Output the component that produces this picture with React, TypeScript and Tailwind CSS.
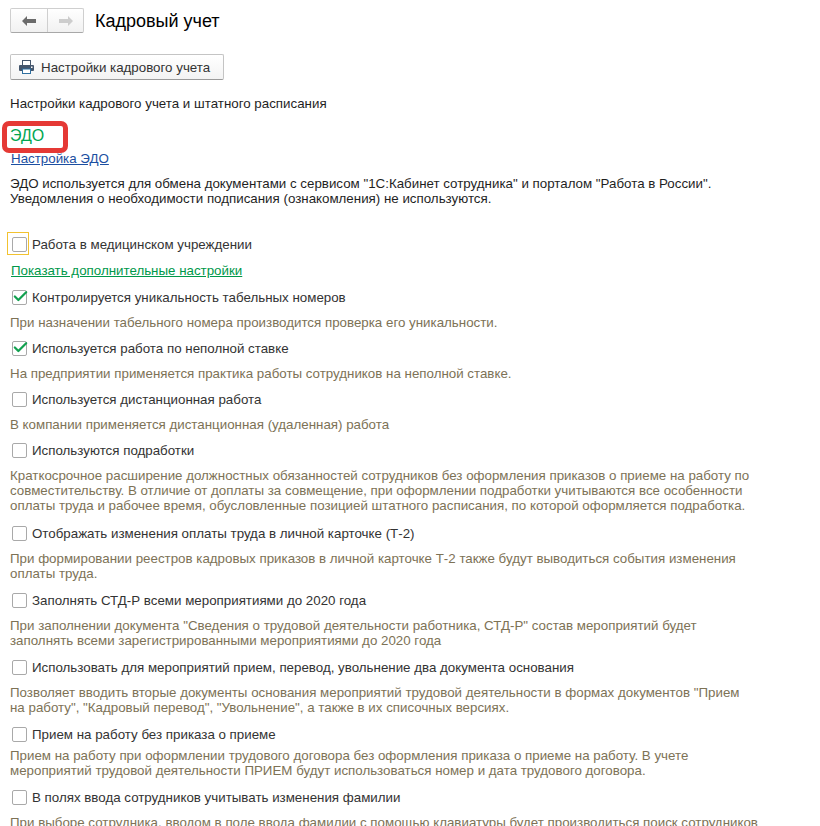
import { Check } from "lucide-react";

function Option({ label, checked, focused, top, gap = 10, hint }: { label: string; checked?: boolean; focused?: boolean; top: number; gap?: number; hint?: string[] }) {
  return (
    <div style={{ marginTop: top }}>
      <div className="flex items-center h-[16px]">
        <div className="relative w-[18px] h-[18px] flex items-center justify-center shrink-0">
          {focused && <div className="absolute left-[-3px] top-[-3px] w-[22px] h-[23px] border border-[#f2c230]" />}
          <div className="relative w-[15px] h-[15px] bg-white border border-[#a9a9a9] rounded-[2px]">
            {checked && <Check className="absolute left-[-1px] top-[-3px] w-[17px] h-[17px] text-[#12a150]" strokeWidth={3.2} />}
          </div>
        </div>
        <span className="ml-[4px] text-[#333333]">{label}</span>
      </div>
      {hint && (
        <div style={{ marginTop: gap }} className="leading-[15px] text-[#7d7256]">
          {hint.map((h) => (
            <div key={h} className="whitespace-nowrap">{h}</div>
          ))}
        </div>
      )}
    </div>
  );
}

export default function App() {
  return (
    <div className="w-[820px] h-[826px] overflow-hidden bg-white text-[13.33px] leading-[15px] text-[#1f1f1f] pl-[10px] font-['Liberation_Sans',Arial,sans-serif]">
      {/* Header */}
      <div className="flex items-center pt-[8px]">
        <div className="flex w-[74px] h-[25px] rounded-[2px] border border-[#cfcfcf] border-b-[#a8a8a8] bg-gradient-to-b from-white to-[#f1f1f1]">
          <div className="w-[37px] flex items-center justify-center border-r border-[#cfcfcf]">
            <svg width="14" height="10" viewBox="0 0 14 10"><path d="M0 5 L5 0 V3 H14 V7 H5 V10 Z" fill="#6b6b6b" /></svg>
          </div>
          <div className="flex-1 flex items-center justify-center">
            <svg width="14" height="10" viewBox="0 0 14 10"><path d="M14 5 L9 0 V3 H0 V7 H9 V10 Z" fill="#cdcdcd" /></svg>
          </div>
        </div>
        <h1 className="ml-[11px] text-[18px] leading-[24px] text-black">Кадровый учет</h1>
      </div>

      <div className="mt-[21px] flex items-center w-[214px] h-[26px] rounded-[2px] border border-[#c4c4c4] border-b-[#9a9a9a] bg-gradient-to-b from-white to-[#f3f3f3] pl-[8px]">
        <svg width="15" height="14" viewBox="0 0 15 14">
          <rect x="3.5" y="0.5" width="8" height="5" fill="#fff" stroke="#44566c" />
          <rect x="0" y="5" width="15" height="6" rx="1" fill="#44566c" />
          <rect x="3.5" y="9" width="8" height="4.5" fill="#fff" stroke="#2f6f9f" />
          <rect x="12" y="6.5" width="1.5" height="1.5" fill="#fff" />
        </svg>
        <span className="ml-[7px] text-[#333333]">Настройки кадрового учета</span>
      </div>

      <div className="mt-[16px]">Настройки кадрового учета и штатного расписания</div>

      <div className="relative mt-[15px] h-[20px] text-[16px] leading-[20px] text-[#00a651]">
        ЭДО
        <div className="absolute left-[-8px] top-[-5px] w-[66px] h-[32px] border-[5px] border-[#e53935] rounded-[7px]" />
      </div>

      <div className="mt-[5px] ml-[1px] text-[#1c4fa1] underline">Настройка ЭДО</div>

      <div className="mt-[11px] leading-[14.5px]">
        <div className="whitespace-nowrap">ЭДО используется для обмена документами с сервисом "1С:Кабинет сотрудника" и порталом "Работа в России".</div>
        <div className="whitespace-nowrap">Уведомления о необходимости подписания (ознакомления) не используются.</div>
      </div>

      <Option top={30} focused label="Работа в медицинском учреждении" />

      <div className="mt-[11px] ml-[1px] text-[#00984a] underline">Показать дополнительные настройки</div>

      <Option top={11} checked label="Контролируется уникальность табельных номеров" hint={["При назначении табельного номера производится проверка его уникальности."]} />
      <Option top={10} checked label="Используется работа по неполной ставке" hint={["На предприятии применяется практика работы сотрудников на неполной ставке."]} />
      <Option top={10} label="Используется дистанционная работа" hint={["В компании применяется дистанционная (удаленная) работа"]} />
      <Option top={10} label="Используются подработки" hint={[
        "Краткосрочное расширение должностных обязанностей сотрудников без оформления приказов о приеме на работу по",
        "совместительству. В отличие от доплаты за совмещение, при оформлении подработки учитываются все особенности",
        "оплаты труда и рабочее время, обусловленные позицией штатного расписания, по которой оформляется подработка.",
      ]} />
      <Option top={12} label="Отображать изменения оплаты труда в личной карточке (Т-2)" hint={[
        "При формировании реестров кадровых приказов в личной карточке Т-2 также будут выводиться события изменения",
        "оплаты труда.",
      ]} />
      <Option top={11} label="Заполнять СТД-Р всеми мероприятиями до 2020 года" hint={[
        'При заполнении документа "Сведения о трудовой деятельности работника, СТД-Р" состав мероприятий будет',
        "заполнять всеми зарегистрированными мероприятиями до 2020 года",
      ]} />
      <Option top={11} label="Использовать для мероприятий прием, перевод, увольнение два документа основания" hint={[
        'Позволяет вводить вторые документы основания мероприятий трудовой деятельности в формах документов "Прием',
        'на работу", "Кадровый перевод", "Увольнение", а также в их списочных версиях.',
      ]} />
      <Option top={11} gap={6} label="Прием на работу без приказа о приеме" hint={[
        "Прием на работу при оформлении трудового договора без оформления приказа о приеме на работу. В учете",
        "мероприятий трудовой деятельности ПРИЕМ будут использоваться номер и дата трудового договора.",
      ]} />
      <Option top={11} label="В полях ввода сотрудников учитывать изменения фамилии" hint={[
        "При выборе сотрудника, вводом в поле ввода фамилии с помощью клавиатуры будет производиться поиск сотрудников",
      ]} />
    </div>
  );
}
